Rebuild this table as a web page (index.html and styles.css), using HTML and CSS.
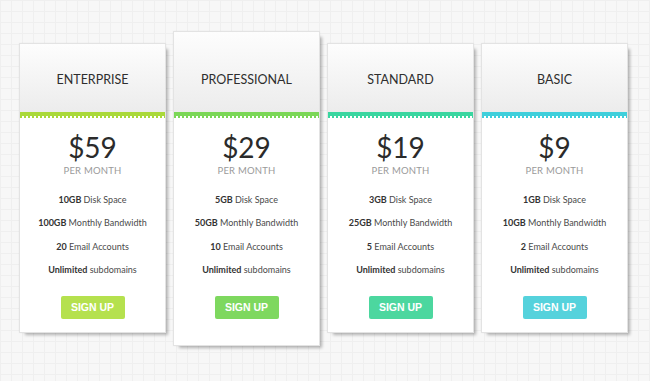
FILE: index.html
```html
<!DOCTYPE html>
<html>
<head>
<meta charset="utf-8">
<link rel="stylesheet" href="styles.css">
</head>
<body>
<div class="plans">
  <div class="plan plan-enterprise">
    <div class="plan-head"><h2 class="plan-title">ENTERPRISE</h2></div>
    <div class="plan-band"></div>
    <div class="plan-body">
      <div class="price">$59</div>
      <div class="period">PER MONTH</div>
      <ul class="features">
        <li><b>10GB</b> Disk Space</li>
        <li><b>100GB</b> Monthly Bandwidth</li>
        <li><b>20</b> Email Accounts</li>
        <li><b>Unlimited</b> subdomains</li>
      </ul>
      <a class="btn">SIGN UP</a>
    </div>
  </div>
  <div class="plan plan-professional featured">
    <div class="plan-head"><h2 class="plan-title">PROFESSIONAL</h2></div>
    <div class="plan-band"></div>
    <div class="plan-body">
      <div class="price">$29</div>
      <div class="period">PER MONTH</div>
      <ul class="features">
        <li><b>5GB</b> Disk Space</li>
        <li><b>50GB</b> Monthly Bandwidth</li>
        <li><b>10</b> Email Accounts</li>
        <li><b>Unlimited</b> subdomains</li>
      </ul>
      <a class="btn">SIGN UP</a>
    </div>
  </div>
  <div class="plan plan-standard">
    <div class="plan-head"><h2 class="plan-title">STANDARD</h2></div>
    <div class="plan-band"></div>
    <div class="plan-body">
      <div class="price">$19</div>
      <div class="period">PER MONTH</div>
      <ul class="features">
        <li><b>3GB</b> Disk Space</li>
        <li><b>25GB</b> Monthly Bandwidth</li>
        <li><b>5</b> Email Accounts</li>
        <li><b>Unlimited</b> subdomains</li>
      </ul>
      <a class="btn">SIGN UP</a>
    </div>
  </div>
  <div class="plan plan-basic">
    <div class="plan-head"><h2 class="plan-title">BASIC</h2></div>
    <div class="plan-band"></div>
    <div class="plan-body">
      <div class="price">$9</div>
      <div class="period">PER MONTH</div>
      <ul class="features">
        <li><b>1GB</b> Disk Space</li>
        <li><b>10GB</b> Monthly Bandwidth</li>
        <li><b>2</b> Email Accounts</li>
        <li><b>Unlimited</b> subdomains</li>
      </ul>
      <a class="btn">SIGN UP</a>
    </div>
  </div>
</div>
</body>
</html>
```
FILE: styles.css
```css
html, body {
  margin: 0;
  padding: 0;
}
body {
  width: 650px;
  height: 381px;
  overflow: hidden;
  background-color: #f7f7f7;
  background-image:
    linear-gradient(to right, #efefef 1px, transparent 1px),
    linear-gradient(to bottom, #efefef 1px, transparent 1px);
  background-size: 11px 11px;
  font-family: Lato, "Open Sans", sans-serif;
  color: #333;
}
.plans {
  display: flex;
  align-items: flex-start;
  gap: 7px;
  padding: 31px 0 0 19px;
}
.plan {
  width: 147px;
  flex: none;
  box-sizing: border-box;
  margin-top: 12px;
  background: #fff;
  border: 1px solid #e3e3e3;
  box-shadow: 0 0 2px rgba(0,0,0,0.05), 4px 4px 3px -2px rgba(0,0,0,0.28);
}
.plan.featured {
  margin-top: 0;
}
.plan-head {
  height: 68px;
  box-sizing: border-box;
  padding-top: 3px;
  display: flex;
  align-items: center;
  justify-content: center;
  background: linear-gradient(to bottom, #fdfdfd, #ececec);
}
.featured .plan-head {
  height: 80px;
  padding-top: 0;
  align-items: flex-end;
}
.featured .plan-title {
  margin-bottom: 23px;
}
.plan-title {
  margin: 0;
  font-size: 12.5px;
  line-height: 18px;
  font-weight: 400;
  color: #2e2e2e;
}
.plan-band {
  height: 6px;
  --c: #aad93a;
  background:
    linear-gradient(var(--c), var(--c)) top / 100% 4px no-repeat,
    repeating-linear-gradient(to right, var(--c) 0 2px, #fff 2px 4px) bottom / 100% 2px no-repeat;
}
.plan-professional .plan-band { --c: #7bd757; }
.plan-standard .plan-band { --c: #3ad6a0; }
.plan-basic .plan-band { --c: #3fcfdb; }
.plan-body {
  display: flex;
  flex-direction: column;
  align-items: center;
  padding: 12px 0 13px;
}
.featured .plan-body {
  padding-bottom: 26px;
}
.price {
  font-size: 28px;
  line-height: 34px;
  color: #2b2b2b;
}
.period {
  margin-top: 1px;
  font-size: 9.5px;
  line-height: 11px;
  letter-spacing: 0.2px;
  color: #9a9a9a;
}
.features {
  list-style: none;
  margin: 12px 0 0;
  padding: 0;
  text-align: center;
}
.features li {
  font-size: 9px;
  line-height: 23.4px;
  color: #4a4a4a;
  white-space: nowrap;
}
.features b {
  font-weight: 700;
  color: #333;
}
.btn {
  margin-top: 14px;
  width: 64px;
  height: 23px;
  display: flex;
  align-items: center;
  justify-content: center;
  border-radius: 2px;
  background: #b5e14e;
  color: #fff;
  font-family: "Liberation Sans", Arial, sans-serif;
  font-weight: 700;
  font-size: 10.5px;
}
.plan-professional .btn { background: #7ed85f; }
.plan-standard .btn { background: #4cd79f; }
.plan-basic .btn { background: #55d2dc; }
```
